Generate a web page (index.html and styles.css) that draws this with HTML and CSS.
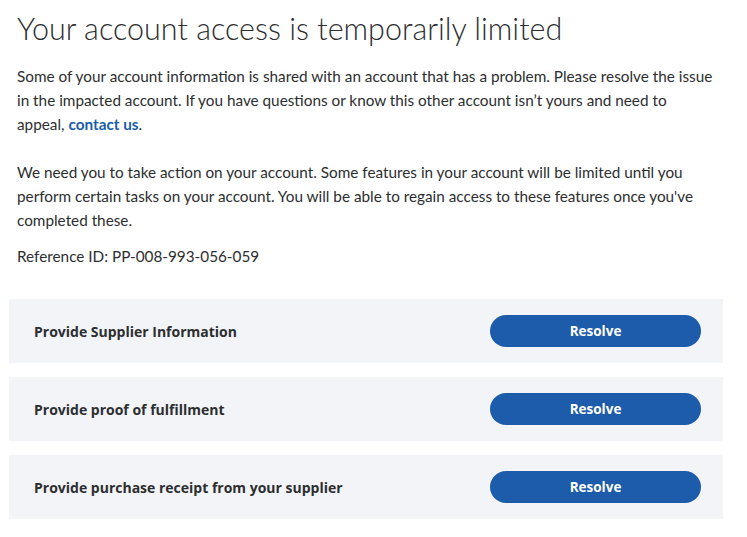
FILE: index.html
```html
<!DOCTYPE html>
<html lang="en">
<head>
<meta charset="utf-8">
<title>Account access limited</title>
<link rel="stylesheet" href="styles.css">
</head>
<body>
<main class="page">
  <section class="intro">
    <h1 class="title">Your account access is temporarily limited</h1>
    <p class="text">Some of your account information is shared with an account that has a problem. Please resolve the issue in the impacted account. If you have questions or know this other account isn’t yours and need to appeal, <a class="link" href="#">contact us</a>.</p>
    <p class="text spaced">We need you to take action on your account. Some features in your account will be limited until you perform certain tasks on your account. You will be able to regain access to these features once you've completed these.</p>
    <p class="text ref">Reference ID: PP-008-993-056-059</p>
  </section>
  <ul class="tasks">
    <li class="task"><span class="task-label">Provide Supplier Information</span><button class="resolve">Resolve</button></li>
    <li class="task"><span class="task-label">Provide proof of fulfillment</span><button class="resolve">Resolve</button></li>
    <li class="task"><span class="task-label">Provide purchase receipt from your supplier</span><button class="resolve">Resolve</button></li>
  </ul>
</main>
</body>
</html>
```
FILE: styles.css
```css
* { box-sizing: border-box; }
html, body { margin: 0; padding: 0; background: #fff; }
body { font-family: Lato, "Noto Sans", sans-serif; color: #2c2e2f; }
.page { width: 714px; margin-left: 9px; padding-top: 8px; }
.intro { padding: 0 8px 0 8px; }
.title { margin: 0; font-weight: 300; font-size: 30.5px; line-height: 40px; color: #2c2e2f; letter-spacing: 0; }
.text { margin: 0; font-size: 15.3px; line-height: 24px; }
.intro .text:first-of-type { margin-top: 16px; }
.spaced { margin-top: 24px; }
.ref { margin-top: 12px; }
.link { color: #1a5ca8; font-weight: 700; text-decoration: none; }
.tasks { list-style: none; margin: 31px 0 0; padding: 0; display: flex; flex-direction: column; gap: 14px; }
.task { height: 64px; background: #f3f4f8; display: flex; align-items: center; justify-content: space-between; padding: 0 22px 0 25px; }
.task-label { font-family: "Open Sans", sans-serif; font-weight: 700; font-size: 14px; color: #2c2e2f; }
.resolve { width: 211px; height: 32px; border: 0; border-radius: 16px; background: #1d5bab; color: #fff; font-family: "Open Sans", sans-serif; font-weight: 700; font-size: 13.5px; cursor: pointer; }
```
